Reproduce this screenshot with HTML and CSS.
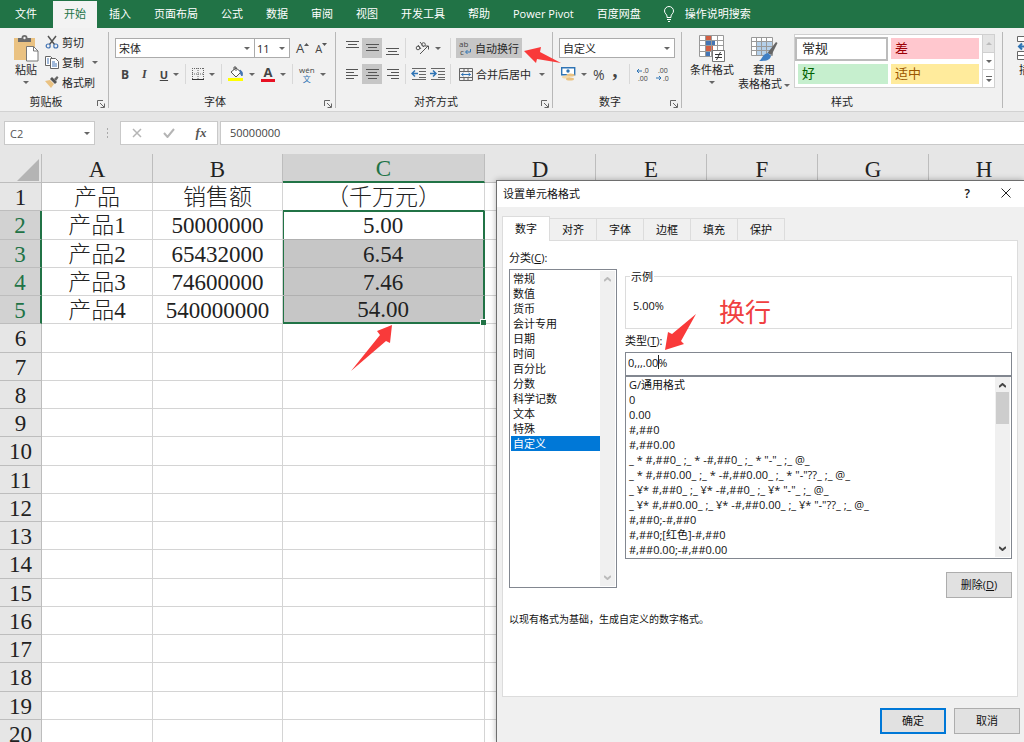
FILE: index.html
```html
<!DOCTYPE html>
<html lang="zh-CN">
<head>
<meta charset="utf-8">
<title>设置单元格格式</title>
<link rel="stylesheet" href="styles.css">
</head>
<body>
<div class="app">
  <nav class="tabs">
    <button class="tab tab-file">文件</button>
    <button class="tab tab-active">开始</button>
    <button class="tab">插入</button>
    <button class="tab">页面布局</button>
    <button class="tab">公式</button>
    <button class="tab">数据</button>
    <button class="tab">审阅</button>
    <button class="tab">视图</button>
    <button class="tab">开发工具</button>
    <button class="tab">帮助</button>
    <button class="tab">Power Pivot</button>
    <button class="tab">百度网盘</button>
    <button class="tab tab-search">
      <svg width="12" height="16" viewBox="0 0 12 16" fill="none" stroke="#fff"><path d="M4 11.500V10C4 8.500 1.500 7.500 1.500 5a4.500 4.500 0 0 1 9 0c0 2.500-2.500 3.500-2.500 5v1.500zM4 13.500h4M5 15.500h2"/></svg>
      操作说明搜索</button>
  </nav>

  <div class="ribbon">
    <section class="group g-clip">
      <div class="group-body">
        <button class="big">
          <svg width="26" height="27" viewBox="0 0 26 27"><path d="M1 3h21v22H1z" fill="#eac282"/><path d="M5 3h3.500a3 3 0 0 1 6 0H18v4H5z" fill="#6b6b6b"/><circle cx="11.500" cy="3" r="1.200" fill="#f1f1f1"/><path d="M13.500 11.500h7l4.500 4.500v10h-11.500z" fill="#fff" stroke="#777"/><path d="M20.500 11.500V16H25" fill="none" stroke="#777"/></svg>
          <span>粘贴</span><i class="caret"></i>
        </button>
        <div class="stack">
          <button class="cmd"><svg width="14" height="14" viewBox="0 0 14 14" fill="none"><path d="M3 1l6.500 8.500M11 1L4.500 9.500" stroke="#555" stroke-width="1.500"/><circle cx="3.200" cy="11" r="2" stroke="#4475b5" stroke-width="1.200"/><circle cx="10.800" cy="11" r="2" stroke="#4475b5" stroke-width="1.200"/></svg>剪切</button>
          <button class="cmd"><svg width="14" height="14" viewBox="0 0 14 14" fill="#fff" stroke="#666"><path d="M.5 1.500h5l2 2v7h-7z"/><path d="M5.500 3.500h5l3 3v7h-8z"/><path d="M2 4h2M2 6h2M2 8h2M7 7h3M7 9h5M7 11h5" stroke="#4475b5"/></svg>复制<i class="caret caret-far"></i></button>
          <button class="cmd"><svg width="14" height="14" viewBox="0 0 14 14"><path d="M0 6l5-1 4 4-3 4z" fill="#eac282"/><path d="M5 4l2-2 5 5-2 2z" fill="#555"/><path d="M9 4l3-3 1.500 1.500L11 6z" fill="#666"/></svg>格式刷</button>
        </div>
      </div>
      <footer class="group-name">剪贴板<svg class="launch" width="8" height="8" viewBox="0 0 8 8" fill="none" stroke="#666"><path d="M.5 6V.5H6M3 3l4 4M7.500 3.500v4h-4"/></svg></footer>
    </section>

    <section class="group g-font">
      <div class="group-body rows">
        <div class="row">
          <select class="drop font-name" aria-label="字体"><option>宋体</option></select>
          <select class="drop font-size" aria-label="字号"><option>11</option></select>
          <button class="ic grow">A<svg width="5" height="4" viewBox="0 0 5 4"><path d="M0 3l2.500-3L5 3z" fill="#555"/></svg></button>
          <button class="ic grow shrink">A<svg width="5" height="4" viewBox="0 0 5 4"><path d="M0 0h5L2.500 3z" fill="#555"/></svg></button>
        </div>
        <div class="row font-tools">
          <button class="ic"><b>B</b></button>
          <button class="ic"><em>I</em></button>
          <button class="ic"><u>U</u><i class="caret"></i></button>
          <span class="sep"></span>
          <button class="ic"><svg width="12" height="12" viewBox="0 0 12 12" fill="none" stroke="#666"><path d="M.5 0v11M11.500 0v11M6 0v11M0 .5h12M0 6h12" stroke-dasharray="1 1"/><path d="M0 11.500h12" stroke="#333"/></svg><i class="caret"></i></button>
          <span class="sep"></span>
          <button class="ic"><svg width="16" height="16" viewBox="0 0 16 16"><path d="M3 6l5-4 5 4-5 5z" fill="#fff" stroke="#555"/><path d="M6 4V1h2v4" fill="none" stroke="#555"/><path d="M12 4c2 1 3 3 2 6-1-1-2-3-2-6z" fill="#4475b5" stroke="#4475b5"/><path d="M0 12h15v3H0z" fill="#ff0"/></svg><i class="caret"></i></button>
          <button class="ic"><span class="color-a">A</span><i class="caret"></i></button>
          <span class="sep"></span>
          <button class="ic"><span class="pinyin">wén<span>文</span></span><i class="caret"></i></button>
        </div>
      </div>
      <footer class="group-name">字体<svg class="launch" width="8" height="8" viewBox="0 0 8 8" fill="none" stroke="#666"><path d="M.5 6V.5H6M3 3l4 4M7.500 3.500v4h-4"/></svg></footer>
    </section>

    <section class="group g-align">
      <div class="group-body rows">
        <div class="row">
          <button class="sq"><svg width="13" height="14" viewBox="0 0 13 14" stroke="#555"><path d="M0 .5h13M2 3.500h9M0 6.500h13"/></svg></button>
          <button class="sq on"><svg width="13" height="14" viewBox="0 0 13 14" stroke="#555"><path d="M0 3.500h13M2 6.500h9M0 9.500h13"/></svg></button>
          <button class="sq"><svg width="13" height="14" viewBox="0 0 13 14" stroke="#555"><path d="M0 7.500h13M2 10.500h9M0 13.500h13"/></svg></button>
          <span class="sep"></span>
          <button class="ic wide"><svg width="15" height="14" viewBox="0 0 15 14" fill="none" stroke="#555"><path d="M5 13l8-8M10 5h3.500v3.500"/><circle cx="3" cy="7" r="1.800"/><path d="M3 4l3 4M5 1l4 5"/><circle cx="8.500" cy="3.500" r="1.800"/></svg><i class="caret"></i></button>
          <span class="sep"></span>
          <button class="cmd wrap on"><svg width="13" height="16" viewBox="0 0 13 16"><text x="0" y="7" class="tiny ab">ab</text><text x="1" y="15" class="tiny ab">c</text><path d="M11.500 9v3H7M8.500 10l-2 2 2 2" fill="none" stroke="#2f74b5"/></svg>自动换行</button>
        </div>
        <div class="row">
          <button class="sq"><svg width="13" height="12" viewBox="0 0 13 12" stroke="#555"><path d="M0 1.500h12M0 4.500h8M0 7.500h12M0 10.500h8"/></svg></button>
          <button class="sq on"><svg width="13" height="12" viewBox="0 0 13 12" stroke="#555"><path d="M0 1.500h13M2 4.500h9M0 7.500h13M2 10.500h9"/></svg></button>
          <button class="sq"><svg width="13" height="12" viewBox="0 0 13 12" stroke="#555"><path d="M1 1.500h12M5 4.500h8M1 7.500h12M5 10.500h8"/></svg></button>
          <span class="sep"></span>
          <button class="ic indent"><svg width="15" height="12" viewBox="0 0 15 12" fill="none" stroke="#666"><path d="M1 .5h14M8 3.500h7M8 6.500h7M1 11.500h14M8 9.500h7"/><path d="M7 5.500H1M4 2.500l-3 3 3 3" stroke="#2f74b5" stroke-width="1.500"/></svg></button>
          <button class="ic indent"><svg width="15" height="12" viewBox="0 0 15 12" fill="none" stroke="#666"><path d="M1 .5h14M8 3.500h7M8 6.500h7M1 11.500h14M8 9.500h7"/><path d="M0 5.500h6M3 2.500l3 3-3 3" stroke="#2f74b5" stroke-width="1.500"/></svg></button>
          <span class="sep"></span>
          <button class="cmd wrap"><svg width="14" height="13" viewBox="0 0 14 13" fill="none" stroke="#666"><path d="M.5.5h13v12H.5zM.5 3.500h13M.5 9.500h13M5 .5v3M9 .5v3M5 9.500v3M9 9.500v3"/><path d="M2.500 6.500h9M4.500 5l-2 1.500 2 1.500M9.500 5l2 1.500-2 1.500" stroke="#2f74b5"/></svg>合并后居中<i class="caret caret-far"></i></button>
        </div>
      </div>
      <footer class="group-name">对齐方式<svg class="launch" width="8" height="8" viewBox="0 0 8 8" fill="none" stroke="#666"><path d="M.5 6V.5H6M3 3l4 4M7.500 3.500v4h-4"/></svg></footer>
    </section>

    <section class="group g-num">
      <div class="group-body rows">
        <div class="row"><select class="drop num-format" aria-label="数字格式"><option>自定义</option></select></div>
        <div class="row num-tools">
          <button class="ic"><svg width="15" height="14" viewBox="0 0 15 14"><path d="M.7.7h13v7H.7z" fill="#fff" stroke="#2f74b5" stroke-width="1.400"/><circle cx="7" cy="4" r="1.700" fill="#2f74b5"/><ellipse cx="9.500" cy="8" rx="4" ry="1.500" fill="#eac282"/><ellipse cx="5" cy="10" rx="4" ry="1.500" fill="#f3d9ab"/><ellipse cx="9" cy="12" rx="4" ry="1.500" fill="#eac282"/></svg><i class="caret"></i></button>
          <button class="ic pct">%</button>
          <button class="ic comma">,</button>
          <span class="sep"></span>
          <button class="ic"><svg width="14" height="16" viewBox="0 0 14 16"><path d="M6 5H1M3 3L1 5l2 2" fill="none" stroke="#2f74b5"/><text x="7" y="7" class="tiny">.0</text><text x="2" y="15" class="tiny">.00</text></svg></button>
          <button class="ic"><svg width="14" height="16" viewBox="0 0 14 16"><text x="2" y="7" class="tiny">.00</text><text x="7" y="15" class="tiny">.0</text><path d="M0 12h5M3 10l2 2-2 2" fill="none" stroke="#2f74b5"/></svg></button>
        </div>
      </div>
      <footer class="group-name">数字<svg class="launch" width="8" height="8" viewBox="0 0 8 8" fill="none" stroke="#666"><path d="M.5 6V.5H6M3 3l4 4M7.500 3.500v4h-4"/></svg></footer>
    </section>

    <section class="group g-style">
      <div class="group-body">
        <button class="big">
          <svg width="26" height="27" viewBox="0 0 26 27"><path d="M.5.5h24v21H.5z" fill="#fff" stroke="#999"/><path d="M7 1h5v4H7zM7 11h7v5H7z" fill="#d35f43"/><path d="M7 6h9v4H7zM7 17h4v4H7z" fill="#4475b5"/><path d="M.5 5.500h24M.5 10.500h24M.5 16.500h24M6.500.5v21M12.500.5v21M18.500.5v21" fill="none" stroke="#999"/><path d="M13.500 15.500h12v11h-12z" fill="#fff" stroke="#777"/><path d="M16 19.500h7M16 22.500h7M21.500 17l-4 8" stroke="#333"/></svg>
          <span>条件格式</span><i class="caret"></i>
        </button>
        <button class="big table-style">
          <svg width="27" height="27" viewBox="0 0 27 27"><path d="M.5 2.500h21v18H.5z" fill="#fff" stroke="#999"/><path d="M6 7h15v13H6z" fill="#b5d0ea"/><path d="M.5 6.500h21M.5 11.500h21M.5 15.500h21M5.500 2.500v18M10.500 2.500v18M15.500 2.500v18" stroke="#999" fill="none"/><path d="M25 7l1.500 1-6 12-4-2z" fill="#666"/><path d="M17 18l3 3c-1 5-7 5-12 5 3-1 3-7 9-8z" fill="#3f7fc4"/></svg>
          <span>套用</span><span>表格格式<i class="caret caret-near"></i></span>
        </button>
        <div class="gallery">
          <div class="swatches">
            <button class="sw sw-normal">常规</button><button class="sw sw-bad">差</button>
            <button class="sw sw-good">好</button><button class="sw sw-mid">适中</button>
          </div>
          <div class="gallery-nav">
            <button class="off" aria-label="上一行"><i class="caret caret-up"></i></button>
            <button aria-label="下一行"><i class="caret"></i></button>
            <button aria-label="其他"><svg width="6" height="6" viewBox="0 0 6 6"><path d="M0 0h6v1H0zM0 3h6L3 6z" fill="#666"/></svg></button>
          </div>
        </div>
      </div>
      <footer class="group-name">样式</footer>
    </section>

    <section class="group g-cells">
      <div class="group-body">
        <button class="big"><svg width="26" height="27" viewBox="0 0 26 27" fill="#fff" stroke="#666"><path d="M.5 1.500h24v5H.5zM.5 16.500h24v8H.5zM.5 20.500h24M8.500 1.500v5M8.500 16.500v8"/><path d="M10 11.500H2M5 8.500l-3 3 3 3" fill="none" stroke="#2f74b5" stroke-width="2"/></svg><span>插入</span></button>
      </div>
    </section>
  </div>

  <div class="formula-bar">
    <select class="drop name-box" aria-label="名称框"><option>C2</option></select>
    <span class="grip"></span>
    <div class="fx-tools">
      <button aria-label="取消输入"><svg width="10" height="10" viewBox="0 0 10 10" stroke="#b5b5b5" stroke-width="1.500"><path d="M1 1l8 8M9 1L1 9"/></svg></button>
      <button aria-label="输入"><svg width="12" height="10" viewBox="0 0 12 10" fill="none" stroke="#b5b5b5" stroke-width="2"><path d="M1 5l3.500 4L11 1"/></svg></button>
      <button class="fx" aria-label="插入函数">fx</button>
    </div>
    <input class="formula" aria-label="编辑栏" value="50000000">
  </div>

  <main class="sheet">
    <table class="grid">
      <colgroup><col class="c-head"><col class="c-std"><col class="c-b"><col class="c-c"><col class="c-std"><col class="c-std"><col class="c-std"><col class="c-std"><col class="c-std"></colgroup>
      <thead><tr><th class="corner"><svg width="22" height="22" viewBox="0 0 22 22"><path d="M22 0v22H0z" fill="#b4b4b4"/></svg></th><th>A</th><th>B</th><th class="picked">C</th><th>D</th><th>E</th><th>F</th><th>G</th><th>H</th></tr></thead>
      <tbody>
        <tr><th>1</th><td>产品</td><td>销售额</td><td class="above">（千万元）</td><td></td><td></td><td></td><td></td><td></td></tr>
        <tr><th class="picked">2</th><td>产品1</td><td>50000000</td><td class="sel sel-first">5.00</td><td></td><td></td><td></td><td></td><td></td></tr>
        <tr><th class="picked">3</th><td>产品2</td><td>65432000</td><td class="sel">6.54</td><td></td><td></td><td></td><td></td><td></td></tr>
        <tr><th class="picked">4</th><td>产品3</td><td>74600000</td><td class="sel">7.46</td><td></td><td></td><td></td><td></td><td></td></tr>
        <tr><th class="picked">5</th><td>产品4</td><td>540000000</td><td class="sel sel-last">54.00</td><td></td><td></td><td></td><td></td><td></td></tr>
        <tr><th>6</th><td></td><td></td><td></td><td></td><td></td><td></td><td></td><td></td></tr>
        <tr><th>7</th><td></td><td></td><td></td><td></td><td></td><td></td><td></td><td></td></tr>
        <tr><th>8</th><td></td><td></td><td></td><td></td><td></td><td></td><td></td><td></td></tr>
        <tr><th>9</th><td></td><td></td><td></td><td></td><td></td><td></td><td></td><td></td></tr>
        <tr><th>10</th><td></td><td></td><td></td><td></td><td></td><td></td><td></td><td></td></tr>
        <tr><th>11</th><td></td><td></td><td></td><td></td><td></td><td></td><td></td><td></td></tr>
        <tr><th>12</th><td></td><td></td><td></td><td></td><td></td><td></td><td></td><td></td></tr>
        <tr><th>13</th><td></td><td></td><td></td><td></td><td></td><td></td><td></td><td></td></tr>
        <tr><th>14</th><td></td><td></td><td></td><td></td><td></td><td></td><td></td><td></td></tr>
        <tr><th>15</th><td></td><td></td><td></td><td></td><td></td><td></td><td></td><td></td></tr>
        <tr><th>16</th><td></td><td></td><td></td><td></td><td></td><td></td><td></td><td></td></tr>
        <tr><th>17</th><td></td><td></td><td></td><td></td><td></td><td></td><td></td><td></td></tr>
        <tr><th>18</th><td></td><td></td><td></td><td></td><td></td><td></td><td></td><td></td></tr>
        <tr><th>19</th><td></td><td></td><td></td><td></td><td></td><td></td><td></td><td></td></tr>
        <tr><th>20</th><td></td><td></td><td></td><td></td><td></td><td></td><td></td><td></td></tr>
      </tbody>
    </table>
  </main>

  <div class="dialog" role="dialog" aria-labelledby="dlg-title">
    <header class="dlg-bar">
      <span id="dlg-title">设置单元格格式</span>
      <button class="dlg-help">?</button>
      <button aria-label="关闭"><svg width="10" height="10" viewBox="0 0 10 10" stroke="#222"><path d="M.5.5l9 9M9.500.5l-9 9"/></svg></button>
    </header>
    <div class="dlg-tabs">
      <button class="dlg-tab dlg-tab-on">数字</button><button class="dlg-tab">对齐</button><button class="dlg-tab">字体</button><button class="dlg-tab">边框</button><button class="dlg-tab">填充</button><button class="dlg-tab">保护</button>
    </div>
    <div class="panel">
      <div class="panel-label" id="cat-label">分类(<u>C</u>):</div>
      <div class="cols">
        <div class="listbox cats">
          <ul role="listbox" aria-labelledby="cat-label">
            <li role="option">常规</li><li role="option">数值</li><li role="option">货币</li><li role="option">会计专用</li><li role="option">日期</li><li role="option">时间</li><li role="option">百分比</li><li role="option">分数</li><li role="option">科学记数</li><li role="option">文本</li><li role="option">特殊</li><li role="option" aria-selected="true" class="chosen">自定义</li>
          </ul>
          <div class="scroll dim">
            <svg width="7" height="5" viewBox="0 0 7 5"><path d="M0 4l3.500-3L7 4"/></svg>
            <svg width="7" height="5" viewBox="0 0 7 5"><path d="M0 1l3.500 3L7 1"/></svg>
          </div>
        </div>
        <div class="detail">
          <fieldset class="sample"><legend>示例</legend>5.00%</fieldset>
          <label class="type-label" for="fmt">类型(<u>T</u>):</label>
          <div class="fmt-box"><input id="fmt" class="fmt" value="0,,,.00%"></div>
          <div class="listbox formats">
            <ul role="listbox" aria-label="类型">
              <li role="option">G/通用格式</li><li role="option">0</li><li role="option">0.00</li><li role="option">#,##0</li><li role="option">#,##0.00</li><li role="option">_ * #,##0_ ;_ * -#,##0_ ;_ * "-"_ ;_ @_ </li><li role="option">_ * #,##0.00_ ;_ * -#,##0.00_ ;_ * "-"??_ ;_ @_ </li><li role="option">_ ¥* #,##0_ ;_ ¥* -#,##0_ ;_ ¥* "-"_ ;_ @_ </li><li role="option">_ ¥* #,##0.00_ ;_ ¥* -#,##0.00_ ;_ ¥* "-"??_ ;_ @_ </li><li role="option">#,##0;-#,##0</li><li role="option">#,##0;[红色]-#,##0</li><li role="option">#,##0.00;-#,##0.00</li>
            </ul>
            <div class="scroll">
              <svg width="7" height="5" viewBox="0 0 7 5"><path d="M0 4l3.500-3L7 4"/></svg>
              <span class="thumb"></span>
              <svg width="7" height="5" viewBox="0 0 7 5"><path d="M0 1l3.500 3L7 1"/></svg>
            </div>
          </div>
          <button class="push delete">删除(<u>D</u>)</button>
        </div>
      </div>
      <p class="note">以现有格式为基础，生成自定义的数字格式。</p>
    </div>
    <footer class="dlg-foot">
      <button class="push push-default">确定</button>
      <button class="push">取消</button>
    </footer>
  </div>

  <svg class="marks" width="1024" height="742" viewBox="0 0 1024 742" fill="#f93a3a">
    <path d="M524 51l17-4-1 5 21 11-24-4-1 4z"/>
    <path d="M392 325l-2 18-4-2-35 30 29-36-3-4z"/>
    <path d="M665 350l3-18 4 2 24-20-15 27 3 3z"/>
    <path d="M658.500 355v14" stroke="#222" stroke-width="1"/>
  </svg>
  <span class="remark">换行</span>
</div>
</body>
</html>
```

FILE: styles.css
```css
* { box-sizing: border-box; }
body { margin: 0; font: 11px/15px "Open Sans", "Noto Sans CJK SC", sans-serif; color: #262626; }
button { font: inherit; color: inherit; background: none; border: 0; padding: 0; margin: 0; display: flex; align-items: center; justify-content: center; white-space: nowrap; }
input, select { font: inherit; color: inherit; margin: 0; border-radius: 0; }
ul, p { margin: 0; padding: 0; list-style: none; }
svg { flex: none; }

.app { position: relative; height: 100vh; display: flex; flex-direction: column; overflow: hidden; background: #e6e6e6; }

/* Ribbon tabs */
.tabs { display: flex; gap: 1px; height: 28px; padding-left: 4px; background: #217346; flex: none; }
.tab { padding: 0 11px 1px; color: #fff; }
.tab-file { width: 48px; justify-content: flex-start; }
.tab-active { margin-top: 1px; padding-bottom: 2px; background: #f3f3f3; color: #217346; }
.tab-search { padding: 0 10px 1px; gap: 10px; }

/* Ribbon groups */
.ribbon { display: flex; height: 84px; flex: none; background: #f1f1f1; border-bottom: 1px solid #d2d2d2; overflow: hidden; }
.group { flex: none; display: flex; flex-direction: column; margin: 4px 0 3px; border-right: 1px solid #b8b8b8; }
.group-body { display: flex; flex: 1; }
.group-name { position: relative; height: 16px; line-height: 19px; text-align: center; }
.launch { position: absolute; right: 3px; bottom: 0; }
.g-clip { width: 109px; }
.g-font { width: 227px; }
.g-align { width: 217px; }
.g-num { width: 129px; }
.g-style { width: 321px; }
.g-cells { width: 120px; border: 0; }
.g-clip .group-name { padding-right: 16px; }
.g-font .group-name, .g-num .group-name { padding-right: 14px; }
.g-align .group-name { padding-right: 16px; }

.caret { border: 3px solid transparent; border-top-color: #666; border-bottom: 0; display: inline-block; flex: none; }
.caret-up { border-top: 0; border-bottom: 3px solid #bbb; }
.caret-far { margin-left: 5px; }
.sep { width: 1px; height: 20px; background: #d8d8d8; }

.big { flex-direction: column; justify-content: flex-start; line-height: 13px; padding-top: 3px; }
.big span { padding-top: 1px; }
.big .caret { margin-top: 5px; }
.big .caret-near { margin: 0 0 0 2px; vertical-align: middle; }
.g-clip .big { margin-left: 13px; }
.stack { display: flex; flex-direction: column; margin-left: 6px; }
.cmd { gap: 3px; height: 20px; justify-content: flex-start; }

.rows { flex-direction: column; gap: 6px; padding: 6px 0 0 6px; }
.row { display: flex; align-items: center; height: 20px; }
.ic { gap: 5px; color: #444; }
.drop { appearance: none; height: 20px; padding: 0 3px; border: 1px solid #ababab; background: #fff url("data:image/svg+xml,%3Csvg xmlns='http://www.w3.org/2000/svg' width='6' height='3'%3E%3Cpath d='M0 0h6L3 3z' fill='%23666'/%3E%3C/svg%3E") no-repeat right 4px center; }
.font-name { width: 140px; }
.font-size { width: 35px; border-left: 0; padding: 0 2px; }
.grow { gap: 0; font-size: 13px; margin-left: 6px; align-items: flex-start; }
.grow svg { margin-top: 2px; }
.shrink { font-size: 11px; }
.font-tools { gap: 6px; padding-left: 6px; }
.font-tools .ic:nth-child(2) { padding: 0 7px; }
.font-tools em { font-family: "Liberation Serif", serif; font-weight: bold; font-size: 12px; }
.font-tools u { font-weight: bold; }
.font-tools b { font-size: 12px; }
.color-a { width: 14px; border-bottom: 3px solid #e81123; font-weight: bold; font-size: 13px; line-height: 13px; }
.pinyin { font-size: 8px; line-height: 9px; display: flex; flex-direction: column; align-items: center; }
.pinyin span { color: #2f74b5; }

.sq { width: 20px; height: 20px; }
.g-align .on { background: #c6c6c6; }
.g-align .sep { margin: 0 3px; }
.wide { width: 38px; }
.indent { width: 19px; }
.wrap { padding: 0 3px; gap: 3px; margin-left: 2px; }
.tiny { font-size: 7px; fill: #444; }
.ab { font-size: 8px; }

.num-format { width: 116px; }
.num-tools { gap: 6px; padding-left: 2px; }
.pct { font-size: 14px; }
.comma { font: bold 20px/10px "Liberation Serif", serif; padding: 0 5px 9px 2px; }

.g-style .group-body { padding-left: 8px; gap: 4px; }
.gallery { display: flex; margin: 2px 0 0; height: 54px; border: 1px solid #d0d0d0; background: #fff; }
.swatches { display: grid; grid-template-columns: 93px 88px; gap: 2px 3px; padding: 2px 3px 2px 0; }
.sw { font-size: 13px; line-height: 18px; padding-left: 7px; padding-bottom: 2px; justify-content: flex-start; margin: 1px 0 2px; }
.sw-normal { border: 2px solid #bcbcbc; padding-left: 5px; margin: 0; }
.sw-bad { background: #ffc7ce; color: #9c0006; padding-left: 4px; }
.sw-good { background: #c6efce; color: #006100; margin-left: 3px; padding-left: 4px; }
.sw-mid { background: #ffeb9c; color: #9c5700; padding-left: 4px; }
.gallery-nav { display: flex; flex-direction: column; width: 12px; border-left: 1px solid #d0d0d0; }
.gallery-nav button { flex: 1; }
.gallery-nav button + button { border-top: 1px solid #d0d0d0; }
.gallery-nav .off { background: #e4e4e4; }
.g-cells .big { margin-left: 14px; }

/* Formula bar */
.formula-bar { display: flex; height: 42px; padding: 9px 0 9px 4px; flex: none; }
.name-box { width: 91px; height: 24px; padding-left: 5px; border-color: #c9c9c9; color: #555; }
.grip { width: 25px; background: radial-gradient(circle, #aaa 1px, transparent 1px) center / 25px 4px; margin: 6px 0; }
.fx-tools { display: flex; width: 98px; background: #fff; border: 1px solid #c9c9c9; }
.fx-tools button { flex: 1; }
.fx { font: italic bold 13px "Liberation Serif", serif; color: #555; }
.formula { flex: 1; min-width: 0; margin-left: 2px; border: 1px solid #c9c9c9; border-right: 0; padding: 0 9px 1px; font-size: 11px; color: #444; }

/* Worksheet */
.sheet { flex: 1; min-height: 0; overflow: hidden; }
.grid { table-layout: fixed; border-collapse: separate; border-spacing: 0; width: 100%; height: calc(100% + 6px); font: 23px/24px "Liberation Serif", "Noto Sans CJK SC", serif; font-weight: 300; background: #fff; color: #222; }
.c-head { width: 42px; }
.c-std { width: 111px; }
.c-b { width: 130px; }
.c-c { width: 202px; }
.grid th, .grid td { padding: 3px 0 0; border: solid #d4d4d4; border-width: 0 1px 1px 0; text-align: center; font-weight: 300; }
.grid th { background: #e6e6e6; border-color: #bdbdbd; }
.grid thead th { height: 29px; }
.grid .corner { text-align: right; line-height: 0; padding-right: 2px; }
.grid th.picked { background: #d2d2d2; color: #217346; }
.grid tbody th.picked { border-right: 2px solid #217346; }
.grid thead th.picked { border-bottom: 2px solid #217346; }
.grid .above { border-bottom-color: #217346; }
.grid .sel { background: #c6c6c6; border-color: #b0b0b0; border-right: 2px solid #217346; box-shadow: inset 1px 0 #217346; position: relative; }
.grid .sel-first { background: #fff; box-shadow: inset 1px 1px #217346; }
.grid .sel-last { border-bottom: 2px solid #217346; padding-top: 2px; }
.sel-last::after { content: ""; position: absolute; right: -3px; bottom: -3px; width: 5px; height: 5px; background: #217346; border: solid #fff; border-width: 1px 0 0 1px; }

/* Format dialog floats over the sheet */
.dialog { position: absolute; left: 496px; top: 180px; right: 0; bottom: 0; display: flex; flex-direction: column; background: #f0f0f0; border: solid #6e6e6e; border-width: 1px 0 0 1px; box-shadow: 0 0 6px rgba(0, 0, 0, .3); color: #111; }
.dlg-bar { display: flex; align-items: center; height: 26px; background: #fff; padding: 0 13px 2px 6px; }
.dlg-bar span { flex: 1; }
.dlg-help { margin-right: 31px; font-size: 12px; font-weight: 600; }
.dlg-tabs { display: flex; align-items: flex-end; height: 33px; padding-left: 5px; }
.dlg-tab { width: 47px; height: 22px; border: solid #dcdcdc; border-width: 1px 1px 0 0; padding-bottom: 1px; }
.dlg-tab-on { width: 48px; height: 25px; margin-bottom: -1px; background: #fff; z-index: 1; border-left-width: 1px; padding-bottom: 2px; }
.panel { flex: 1; margin: 0 6px 0 5px; padding: 9px 5px 0 6px; background: #fff; border: 1px solid #dcdcdc; }
.cols { display: flex; gap: 8px; margin-top: 4px; }
.listbox { display: flex; border: 1px solid #828790; background: #fff; padding: 1px; }
.listbox ul { flex: 1; min-width: 0; overflow: hidden; }
.listbox li { height: 15px; padding-left: 2px; white-space: pre; }
.cats { width: 108px; height: 319px; }
.chosen { background: #0078d7; color: #fff; }
.scroll { width: 15px; background: #f0f0f0; display: flex; flex-direction: column; align-items: center; padding: 6px 0; fill: none; stroke: #444; stroke-width: 2; }
.scroll svg:last-child { margin-top: auto; }
.dim { stroke: #bbb; }
.thumb { width: 13px; height: 32px; background: #cdcdcd; margin-top: 4px; }
.detail { flex: 1; min-width: 0; display: flex; flex-direction: column; }
.sample { margin: 0; padding: 14px 7px 0; height: 60px; border: 1px solid #dcdcdc; }
.sample legend { padding: 0 1px; margin-left: -3px; }
.type-label { margin: 4px 0; }
.fmt-box { display: flex; height: 24px; }
.fmt { flex: 1; min-width: 0; border: 1px solid #828790; padding: 0 2px 4px; }
.formats { height: 183px; padding-top: 0; }
.push { width: 66px; height: 26px; background: #e1e1e1; border: 1px solid #adadad; padding-bottom: 1px; }
.push-default { border: 2px solid #0078d7; }
.delete { align-self: flex-end; margin-top: 13px; }
.note { margin-top: 14px; font-size: 10px; }
.dlg-foot { display: flex; justify-content: flex-end; gap: 8px; height: 45px; padding: 11px 4px 0 0; }

/* Annotations */
.marks { position: absolute; left: 0; top: 0; pointer-events: none; }
.remark { position: absolute; left: 719px; top: 295px; font-size: 26px; line-height: 34px; color: #f04040; }
```
